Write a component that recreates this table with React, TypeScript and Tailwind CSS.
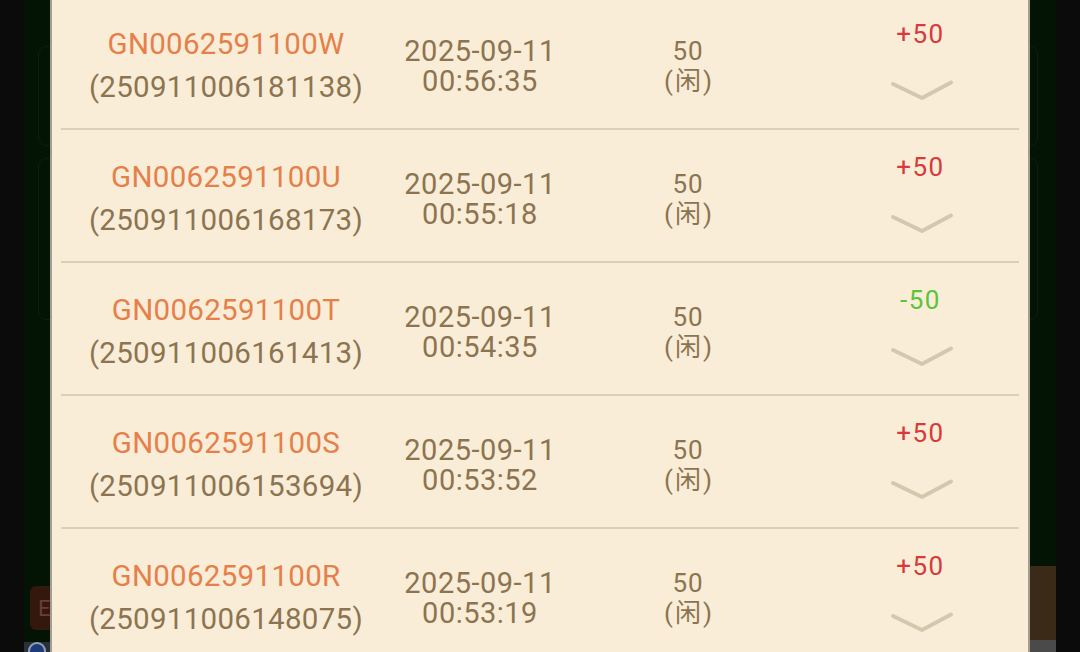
import React from "react";

const rows = [
  { id: "GN0062591100W", no: "250911006181138", time: "00:56:35", res: "+50" },
  { id: "GN0062591100U", no: "250911006168173", time: "00:55:18", res: "+50" },
  { id: "GN0062591100T", no: "250911006161413", time: "00:54:35", res: "-50" },
  { id: "GN0062591100S", no: "250911006153694", time: "00:53:52", res: "+50" },
  { id: "GN0062591100R", no: "250911006148075", time: "00:53:19", res: "+50" },
];

function Chevron() {
  return (
    <svg width="62" height="22" viewBox="0 0 62 22" className="blur-[0.6px]">
      <polyline
        points="2,4 31,18 60,2.5"
        fill="none"
        stroke="#d3c7ad"
        strokeWidth="3.8"
        strokeLinecap="round"
        strokeLinejoin="round"
      />
    </svg>
  );
}

export default function App() {
  return (
    <div
      className="flex w-[1080px] h-[652px] overflow-hidden bg-[#0b0b0b]"
      style={{ fontFamily: "Roboto, 'Noto Sans CJK SC', sans-serif" }}
    >
      {/* left black strip */}
      <div className="w-[24px] shrink-0 bg-[#0b0b0b]" />
      {/* left green area */}
      <div className="w-[26px] shrink-0 flex flex-col bg-[#031405] overflow-hidden">
        <div className="mt-[46px] ml-[14px] h-[100px] w-[40px] shrink-0 rounded-[8px] border border-[#0a200d]" />
        <div className="mt-[12px] ml-[14px] h-[162px] w-[40px] shrink-0 rounded-[8px] border border-[#0a200d]" />
        <div className="flex-1" />
        <div className="mb-[12px] ml-[6px] h-[44px] w-[34px] shrink-0 rounded-[6px] bg-[#33180e] flex items-center pl-[8px] text-[22px] text-[#6e3b36]">
          E
        </div>
        <div className="h-[10px] shrink-0 bg-[#2a2f38] flex items-start">
          <div className="ml-[4px] h-[18px] w-[18px] rounded-full bg-[#1e3b78] border-2 border-[#8fa0b8]" />
        </div>
      </div>

      {/* panel */}
      <div className="w-[980px] shrink-0 h-[652px] overflow-hidden bg-[#f9edd8] border-x-2 border-[#a39e94]">
        <div className="mt-[-3px] flex flex-col">
          {rows.map((r) => (
            <div key={r.id} className="flex flex-col shrink-0">
              <div className="flex h-[131px]">
                <div className="w-[348px] flex flex-col items-center pt-[32px] text-[29.5px] leading-[30px] tracking-[0.3px]">
                  <div className="text-[#e5804a]">{r.id}</div>
                  <div className="mt-[13px] text-[#8d7451]">({r.no})</div>
                </div>
                <div className="w-[160px] flex flex-col items-center pt-[39px] text-[29px] leading-[30px] tracking-[0.5px] text-[#8d7451]">
                  <div>2025-09-11</div>
                  <div>{r.time}</div>
                </div>
                <div className="w-[256px] flex flex-col items-center pt-[39px] text-[26px] leading-[30px] text-[#8d7451]">
                  <div className="tracking-[0.8px]">50</div>
                  <div className="tracking-[2px] pl-[2px]">(闲)</div>
                </div>
                <div className="w-[208px] flex flex-col items-center pt-[22px] text-[26px] leading-[30px]">
                  <div
                    className={
                      "tracking-[1.5px] pl-[1px] " +
                      (r.res.startsWith("-") ? "text-[#5cc43a]" : "text-[#d63a3a]")
                    }
                  >
                    {r.res}
                  </div>
                  <div className="mt-[31px] ml-[4px]">
                    <Chevron />
                  </div>
                </div>
              </div>
              <div className="mx-[9px] h-[2px] bg-[#dccfb5]" />
            </div>
          ))}
        </div>
      </div>

      {/* right green area */}
      <div className="w-[26px] shrink-0 flex flex-col bg-[#031405] overflow-hidden">
        <div className="mt-[46px] ml-[-32px] h-[100px] w-[40px] shrink-0 rounded-[8px] border border-[#0a200d]" />
        <div className="mt-[12px] ml-[-32px] h-[162px] w-[40px] shrink-0 rounded-[8px] border border-[#0a200d]" />
        <div className="flex-1" />
        <div className="h-[74px] shrink-0 bg-[#3a2a17]" />
        <div className="h-[12px] shrink-0 bg-[#4a4a4a]" />
      </div>
      {/* right black strip */}
      <div className="w-[24px] shrink-0 bg-[#0b0b0b]" />
    </div>
  );
}
